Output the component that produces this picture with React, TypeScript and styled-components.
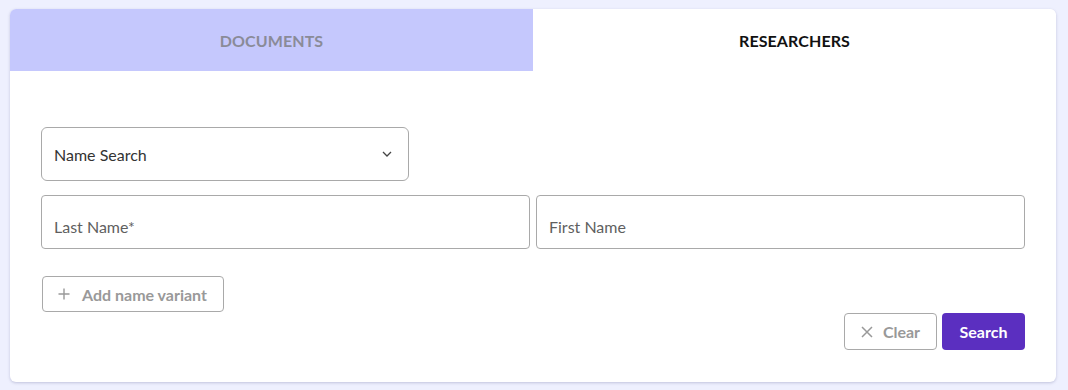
import React from "react";
import styled, { createGlobalStyle } from "styled-components";

const Global = createGlobalStyle`
  html, body { margin: 0; padding: 0; background: #eef0fe; }
  body { font-family: "Lato", "Open Sans", sans-serif; }
  * { box-sizing: border-box; }
`;

const Page = styled.div`
  padding: 9px 12px 8px 10px;
  height: 390px;
`;

const Card = styled.div`
  background: #fff;
  border-radius: 6px;
  box-shadow: 0 1px 3px rgba(60, 60, 120, 0.25);
  height: 373px;
  overflow: hidden;
  display: flex;
  flex-direction: column;
`;

const Tabs = styled.div`
  display: flex;
  height: 62px;
`;

const Tab = styled.div<{ $active?: boolean }>`
  flex: 1;
  display: flex;
  align-items: center;
  justify-content: center;
  background: ${(p) => (p.$active ? "#fff" : "#c5c8fd")};
  color: ${(p) => (p.$active ? "#111" : "#8a8b98")};
  font-weight: 700;
  font-size: 16px;
  letter-spacing: 0.1px;
  padding-top: 1px;
  border-top-right-radius: ${(p) => (p.$active ? "6px" : "0")};
  border-top-left-radius: ${(p) => (p.$active ? "6px" : "0")};
`;

const Body = styled.div`
  flex: 1;
  padding: 56px 31px 0 31px;
  display: flex;
  flex-direction: column;
`;

const Select = styled.div`
  width: 368px;
  height: 54px;
  border: 1px solid #a9a9a9;
  border-radius: 6px;
  display: flex;
  align-items: center;
  justify-content: space-between;
  padding: 0 16px 0 12px;
  font-size: 16px;
  color: #333;
`;

const Row = styled.div`
  display: flex;
  gap: 6px;
  margin-top: 14px;
`;

const Field = styled.div`
  flex: 1;
  height: 54px;
  border: 1px solid #a9a9a9;
  border-radius: 4px;
  display: flex;
  align-items: center;
  padding: 8px 12px 0;
  font-size: 16px;
  color: #5f5f5f;
`;

const VariantButton = styled.button`
  align-self: flex-start;
  margin-top: 27px;
  margin-left: 1px;
  height: 36px;
  padding: 0 16px 0 15px;
  border: 1px solid #a9a9a9;
  border-radius: 4px;
  background: #fff;
  color: #999;
  font-family: inherit;
  font-weight: 700;
  font-size: 16px;
  display: flex;
  align-items: center;
  gap: 12px;
`;

const Actions = styled.div`
  display: flex;
  justify-content: flex-end;
  gap: 5px;
  margin-top: 1px;
`;

const ClearButton = styled.button`
  height: 37px;
  width: 93px;
  border: 1px solid #a9a9a9;
  border-radius: 4px;
  background: #fff;
  color: #999;
  font-family: inherit;
  font-weight: 700;
  font-size: 16px;
  display: flex;
  align-items: center;
  justify-content: center;
  gap: 10px;
`;

const SearchButton = styled.button`
  height: 37px;
  width: 83px;
  border: none;
  border-radius: 4px;
  background: #5b2fc0;
  color: #fff;
  font-family: inherit;
  font-weight: 700;
  font-size: 16px;
`;

export default function App() {
  return (
    <>
      <Global />
      <Page>
        <Card>
          <Tabs>
            <Tab>DOCUMENTS</Tab>
            <Tab $active>RESEARCHERS</Tab>
          </Tabs>
          <Body>
            <Select>
              <span>Name Search</span>
              <svg width="10" height="6" viewBox="0 0 10 6" fill="none">
                <path d="M1 1l4 4 4-4" stroke="#444" strokeWidth="1.3" />
              </svg>
            </Select>
            <Row>
              <Field>Last Name*</Field>
              <Field>First Name</Field>
            </Row>
            <VariantButton>
              <svg width="12" height="12" viewBox="0 0 12 12">
                <path d="M6 0.5v11M0.5 6h11" stroke="#999" strokeWidth="1.4" />
              </svg>
              Add name variant
            </VariantButton>
            <Actions>
              <ClearButton>
                <svg width="12" height="12" viewBox="0 0 12 12">
                  <path d="M1 1l10 10M11 1L1 11" stroke="#999" strokeWidth="1.5" />
                </svg>
                Clear
              </ClearButton>
              <SearchButton>Search</SearchButton>
            </Actions>
          </Body>
        </Card>
      </Page>
    </>
  );
}
